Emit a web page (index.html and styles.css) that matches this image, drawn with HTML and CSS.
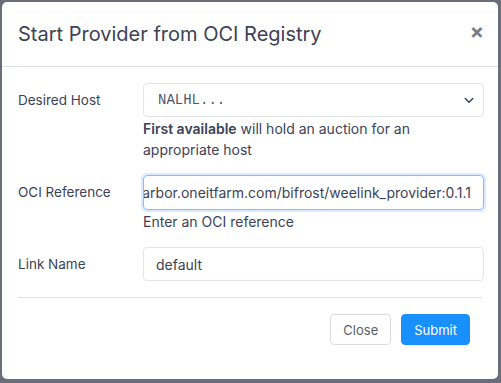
FILE: index.html
```html
<!DOCTYPE html>
<html lang="en">
<head>
    <meta charset="UTF-8">
    <meta name="viewport" content="width=device-width, initial-scale=1.0">
    <title>Start Provider</title>
    <link rel="stylesheet" href="styles.css">
</head>
<body>
    <div class="modal">
        <div class="modal-header">
            <h2>Start Provider from OCI Registry</h2>
            <button class="close-x" type="button">&times;</button>
        </div>

        <div class="modal-body">
            <form class="provider-form">
                <div class="form-row">
                    <label for="host">Desired Host</label>
                    <div class="field">
                        <div class="select-box" id="host">
                            <span class="mono">NALHL...</span>
                            <svg class="chevron" width="12" height="12" viewBox="0 0 16 16">
                                <path d="M3 6l5 5 5-5" fill="none" stroke="#3c4257" stroke-width="2" stroke-linecap="round" stroke-linejoin="round"/>
                            </svg>
                        </div>
                        <p class="help"><strong>First available</strong> will hold an auction for an appropriate host</p>
                    </div>
                </div>

                <div class="form-row">
                    <label for="ociRef">OCI Reference</label>
                    <div class="field">
                        <div class="text-box focused" id="ociRef">
                            <span>harbor.oneitfarm.com/bifrost/weelink_provider:0.1.1</span>
                        </div>
                        <p class="help">Enter an OCI reference</p>
                    </div>
                </div>

                <div class="form-row">
                    <label for="linkName">Link Name</label>
                    <div class="field">
                        <div class="text-box" id="linkName">
                            <span>default</span>
                        </div>
                    </div>
                </div>

                <hr class="divider">

                <div class="actions">
                    <button type="button" class="btn btn-light">Close</button>
                    <button type="submit" class="btn btn-primary">Submit</button>
                </div>
            </form>
        </div>
    </div>
</body>
</html>
```

FILE: styles.css
```css
* {
    margin: 0;
    padding: 0;
    box-sizing: border-box;
    font-family: Inter, 'Noto Sans', sans-serif;
}

body {
    background-color: #6b6e7a;
    padding: 2px 3px 4px 2px;
    height: 383px;
    overflow: hidden;
    color: #3c4257;
}

.modal {
    background-color: #fff;
    border-radius: 5px;
    height: 377px;
}

.modal-header {
    display: flex;
    justify-content: space-between;
    align-items: center;
    padding: 16px 14px 16px 16px;
    border-bottom: 1px solid #dcdfe6;
    height: 65px;
}

.modal-header h2 {
    font-size: 20px;
    font-weight: 400;
    line-height: 30px;
    color: #3c4257;
}

.close-x {
    border: none;
    background: none;
    font-size: 21px;
    font-weight: 700;
    color: #7a7d88;
    line-height: 1;
    margin-top: -6px;
    cursor: pointer;
}

.modal-body {
    padding: 16px 14px 0 16px;
}

.form-row {
    display: grid;
    grid-template-columns: 125px minmax(0, 1fr);
    margin-bottom: 15px;
}

.form-row label {
    font-size: 13.5px;
    line-height: 34px;
    color: #3c4257;
}

.field {
    min-width: 0;
}

.select-box,
.text-box {
    height: 34px;
    border: 1px solid #e3e5ea;
    border-radius: 4px;
    display: flex;
    align-items: center;
    font-size: 14px;
    color: #3c4257;
    overflow: hidden;
    white-space: nowrap;
}

.select-box {
    justify-content: space-between;
    padding: 0 8px 0 14px;
}

.mono {
    font-family: 'Liberation Mono', monospace;
    font-size: 14px;
    color: #50566a;
}

.text-box {
    padding: 0 12px;
}

.text-box span {
    flex-shrink: 0;
}

.text-box.focused {
    height: 35px;
    justify-content: flex-end;
    border-color: #80bdff;
    box-shadow: 0 0 0 2px rgba(0, 123, 255, 0.15);
}

.help {
    font-size: 14px;
    line-height: 21px;
    margin-top: 1px;
    color: #3c4257;
}

.help strong {
    font-weight: 600;
}

.divider {
    border: none;
    border-top: 1px solid #dcdfe6;
    margin: 16px 2px 16px 0;
}

.actions {
    display: flex;
    justify-content: flex-end;
    gap: 10px;
    padding-right: 14px;
}

.btn {
    height: 31px;
    border-radius: 4px;
    font-size: 13px;
    padding: 0 12px;
    cursor: pointer;
}

.btn-light {
    background-color: #fff;
    border: 1px solid #d9dce2;
    color: #5a5f6e;
}

.btn-primary {
    background-color: #1890ff;
    border: 1px solid #1890ff;
    color: #fff;
}
```
